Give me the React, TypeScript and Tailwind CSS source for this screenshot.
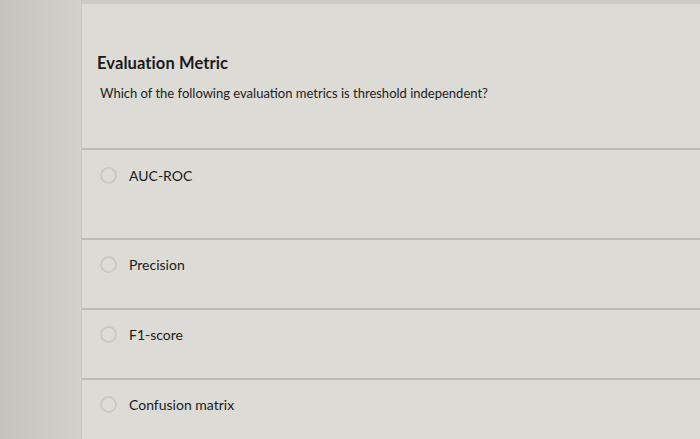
import React, { useState } from 'react';

const options = ['AUC-ROC', 'Precision', 'F1-score', 'Confusion matrix'];

const App: React.FC = () => {
    const [selected, setSelected] = useState<string | null>(null);

    return (
        <div
            className="w-[700px] h-[439px] overflow-hidden flex bg-[#cfcdc8]"
            style={{ fontFamily: 'Lato, "Open Sans", sans-serif' }}
        >
            {/* Sidebar */}
            <div className="w-[82px] shrink-0 bg-gradient-to-r from-[#c4c3be] to-[#d3d1cc] border-r border-[#c7c6c1]" />

            {/* Main panel */}
            <div className="flex-1 flex flex-col bg-[#dcdbd6] border-t-[4px] border-[#cbcac5]">
                <div className="pl-[15px] pt-[47px] h-[144px] shrink-0">
                    <h1 className="text-[16.5px] font-bold text-[#1a1a1a] tracking-[0.1px]">Evaluation Metric</h1>
                    <p className="mt-[8px] ml-[3px] text-[13px] text-[#222]">
                        Which of the following evaluation metrics is threshold independent?
                    </p>
                </div>

                {options.map((opt, i) => (
                    <label
                        key={opt}
                        onClick={() => setSelected(opt)}
                        className={`flex items-start gap-[12px] border-t-2 border-[#bdbcb8] pl-[18px] shrink-0 cursor-pointer ${
                            i === 0 ? 'h-[90px] pt-[17px]' : 'h-[70px] pt-[16px]'
                        }`}
                    >
                        <span
                            className={`w-[17px] h-[17px] rounded-full border-2 shrink-0 ${
                                selected === opt ? 'border-[#4a4a4a] bg-[#4a4a4a]' : 'border-[#cac9c4] bg-[#dddcd7]'
                            }`}
                        />
                        <span className="text-[14px] text-[#1a1a1a] leading-[17px]">{opt}</span>
                    </label>
                ))}
            </div>
        </div>
    );
};

export default App;
